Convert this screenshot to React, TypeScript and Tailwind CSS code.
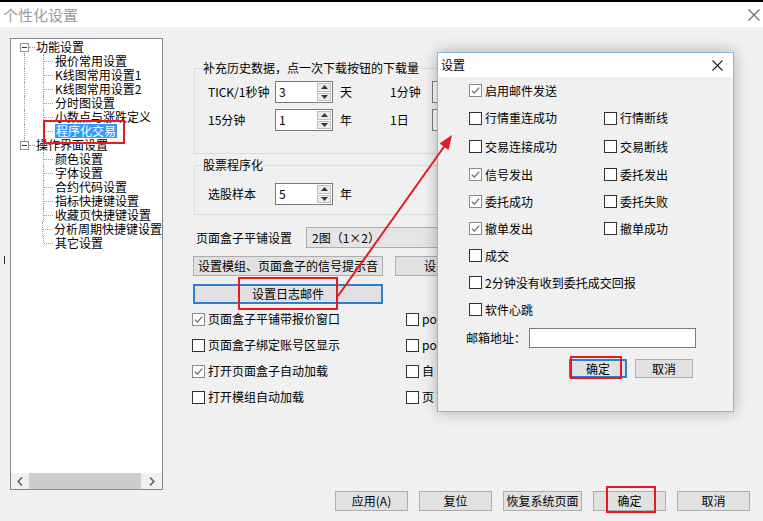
import React from "react";

function Box({ checked }: { checked?: boolean }) {
  return (
    <span
      className={`relative inline-flex h-[13px] w-[13px] shrink-0 bg-white border ${
        checked ? "border-[#8a8a8a]" : "border-[#333333]"
      }`}
    >
      {checked && (
        <svg className="absolute left-0 top-0" width="11" height="11" viewBox="0 0 11 11">
          <path d="M1.8 5.6 L4.3 8.1 L9.2 2.6" fill="none" stroke="#6a6a6a" strokeWidth="1.3" />
        </svg>
      )}
    </span>
  );
}

function Check({ label, checked }: { label: string; checked?: boolean }) {
  return (
    <span className="flex items-center gap-[3px] whitespace-nowrap">
      <Box checked={checked} />
      <span className="block leading-[14px]">{label}</span>
    </span>
  );
}

function Spin({ v }: { v: string }) {
  return (
    <div className="flex h-[22px] w-[58px] shrink-0 border border-[#7a7a7a] bg-white">
      <span className="flex-1 pl-[3px] leading-[20px]">{v}</span>
      <div className="flex w-[15px] flex-col gap-[1px] py-[1px] pr-[1px]">
        <span className="flex flex-1 items-center justify-center border border-[#bdbdbd] bg-[#ececec]">
          <svg width="7" height="4" viewBox="0 0 7 4">
            <path d="M0 4 L3.5 0 L7 4Z" fill="#333" />
          </svg>
        </span>
        <span className="flex flex-1 items-center justify-center border border-[#bdbdbd] bg-[#ececec]">
          <svg width="7" height="4" viewBox="0 0 7 4">
            <path d="M0 0 L3.5 4 L7 0Z" fill="#333" />
          </svg>
        </span>
      </div>
    </div>
  );
}

function XIcon({ size, color }: { size: number; color: string }) {
  return (
    <svg width={size} height={size} viewBox={`0 0 ${size} ${size}`}>
      <path d={`M0.5 0.5 L${size - 0.5} ${size - 0.5} M${size - 0.5} 0.5 L0.5 ${size - 0.5}`} stroke={color} strokeWidth="1.1" fill="none" />
    </svg>
  );
}

type Row = { text: string; level: 0 | 1; sel?: boolean; last?: boolean; group: 1 | 2; first?: boolean };

const rows: Row[] = [
  { text: "功能设置", level: 0, group: 1, first: true },
  { text: "报价常用设置", level: 1, group: 1 },
  { text: "K线图常用设置1", level: 1, group: 1 },
  { text: "K线图常用设置2", level: 1, group: 1 },
  { text: "分时图设置", level: 1, group: 1 },
  { text: "小数点与涨跌定义", level: 1, group: 1 },
  { text: "程序化交易", level: 1, group: 1, sel: true, last: true },
  { text: "操作界面设置", level: 0, group: 2 },
  { text: "颜色设置", level: 1, group: 2 },
  { text: "字体设置", level: 1, group: 2 },
  { text: "合约代码设置", level: 1, group: 2 },
  { text: "指标快捷键设置", level: 1, group: 2 },
  { text: "收藏页快捷键设置", level: 1, group: 2 },
  { text: "分析周期快捷键设置", level: 1, group: 2 },
  { text: "其它设置", level: 1, group: 2, last: true },
];

function TreeRow({ r }: { r: Row }) {
  if (r.level === 0) {
    return (
      <div className="flex h-[14px] items-center">
        <div className="relative h-full w-[20px]">
          {r.first ? (
            <span className="absolute left-[10px] top-[7px] h-[7px] border-l border-dotted border-[#a0a0a0]" />
          ) : (
            <span className="absolute left-[10px] top-0 h-[7px] border-l border-dotted border-[#a0a0a0]" />
          )}
          <span className="absolute left-[15px] top-[7px] w-[6px] border-t border-dotted border-[#a0a0a0]" />
          <span className="absolute left-[6px] top-[3px] flex h-[9px] w-[9px] items-center justify-center border border-[#919191] bg-white">
            <span className="h-0 w-[5px] border-t border-[#333]" />
          </span>
        </div>
        <span className="ml-[2px] block whitespace-nowrap leading-[14px]">{r.text}</span>
      </div>
    );
  }
  return (
    <div className="flex h-[14px] items-center">
      <div className="relative h-full w-[20px]">
        {r.group === 1 && <span className="absolute left-[10px] top-0 h-[14px] border-l border-dotted border-[#a0a0a0]" />}
      </div>
      <div className="relative h-full w-[19px]">
        <span
          className={`absolute left-[9px] top-0 border-l border-dotted border-[#a0a0a0] ${r.last ? "h-[7px]" : "h-[14px]"}`}
        />
        <span className="absolute left-[10px] top-[7px] w-[9px] border-t border-dotted border-[#a0a0a0]" />
      </div>
      <span
        className={`ml-[2px] block whitespace-nowrap leading-[14px] ${r.sel ? "bg-[#3399ff] px-[1px] text-white" : ""}`}
      >
        {r.text}
      </span>
    </div>
  );
}

function Btn({ children, cls }: { children: React.ReactNode; cls: string }) {
  return (
    <div className={`flex shrink-0 items-center justify-center overflow-hidden whitespace-nowrap leading-[14px] ${cls}`}>{children}</div>
  );
}

export default function App() {
  return (
    <div className="relative h-[521px] w-[763px] overflow-hidden bg-[#f0f0f0] font-['Noto_Sans_CJK_SC','Noto_Sans',sans-serif] text-[12px] text-black">
      <div className="h-[2px] bg-black" />
      <div className="flex h-[25px] items-center justify-between bg-white pl-[3px] pr-[3px]">
        <span className="text-[15px] leading-[20px] text-[#9b9b9b]">个性化设置</span>
        <XIcon size={12} color="#666" />
      </div>

      <div className="flex h-[494px]">
        {/* tree */}
        <div className="ml-[10px] mt-[11px] flex h-[452px] w-[153px] shrink-0 flex-col border border-[#828790] bg-white">
          <div className="flex flex-col pl-[3px] pt-[1px]">
            {rows.map((r, i) => (
              <TreeRow key={i} r={r} />
            ))}
          </div>
          <div className="mt-auto flex h-[16px] items-stretch bg-[#f0f0f0]">
            <div className="flex w-[17px] items-center justify-center">
              <svg width="6" height="9" viewBox="0 0 6 9">
                <path d="M5 0.5 L1.2 4.5 L5 8.5" fill="none" stroke="#606060" strokeWidth="1.6" />
              </svg>
            </div>
            <div className="ml-[1px] w-[112px] bg-[#cdcdcd]" />
            <div className="flex flex-1 items-center justify-center">
              <svg width="6" height="9" viewBox="0 0 6 9">
                <path d="M1 0.5 L4.8 4.5 L1 8.5" fill="none" stroke="#606060" strokeWidth="1.6" />
              </svg>
            </div>
          </div>
        </div>

        {/* right column */}
        <div className="ml-[31px] flex w-[569px] flex-col">
          {/* upper part: its right side lies under the dialog, so it is clipped at the dialog's edge */}
          <div className="-ml-[3px] flex w-[246px] flex-col overflow-hidden pl-[3px]">
            <div className="mt-[41px] flex h-[86px] w-[530px] shrink-0 flex-col border border-[#dcdcdc]">
              <span className="-mt-[9px] ml-[7px] w-fit bg-[#f0f0f0] px-[1px] leading-[16px]">补充历史数据，点一次下载按钮的下载量</span>
              <div className="mt-[5px] flex h-[22px] items-center pl-[13px]">
                <span className="w-[67px] shrink-0">TICK/1秒钟</span>
                <Spin v="3" />
                <span className="ml-[7px] w-[50px] shrink-0">天</span>
                <span className="w-[42px] shrink-0">1分钟</span>
                <Spin v="" />
              </div>
              <div className="mt-[6px] flex h-[22px] items-center pl-[13px]">
                <span className="w-[67px] shrink-0">15分钟</span>
                <Spin v="1" />
                <span className="ml-[7px] w-[50px] shrink-0">年</span>
                <span className="w-[42px] shrink-0">1日</span>
                <Spin v="" />
              </div>
            </div>

            <div className="mt-[11px] flex h-[50px] w-[530px] shrink-0 flex-col border border-[#dcdcdc]">
              <span className="-mt-[9px] ml-[7px] w-fit bg-[#f0f0f0] px-[1px] leading-[16px]">股票程序化</span>
              <div className="mt-[10px] flex h-[22px] items-center pl-[13px]">
                <span className="w-[67px] shrink-0">选股样本</span>
                <Spin v="5" />
                <span className="ml-[7px]">年</span>
              </div>
            </div>

            <div className="mt-[12px] flex h-[21px] items-center pl-[2px]">
              <span className="w-[110px] shrink-0">页面盒子平铺设置</span>
              <div className="flex h-[21px] w-[300px] shrink-0 items-center border border-[#acacac] bg-[#e5e5e5] pl-[5px]">2图（1×2）</div>
            </div>

            <div className="-ml-[1px] mt-[8px] flex gap-[12px]">
              <Btn cls="h-[20px] w-[190px] border border-[#adadad] bg-[#e1e1e1]">设置模组、页面盒子的信号提示音</Btn>
              <Btn cls="h-[20px] w-[60px] justify-end border border-[#adadad] bg-[#e1e1e1] pr-[18px]">设</Btn>
            </div>
            <div className="-ml-[1px] mt-[8px] flex">
              <Btn cls="h-[20px] w-[190px] border-2 border-[#2f7fd1] bg-[#e1e1e1]">设置日志邮件</Btn>
            </div>

            <div className="-ml-[2px] mt-[2px] grid grid-cols-[214px_32px]">
              <div className="flex h-[26px] items-center"><Check label="页面盒子平铺带报价窗口" checked /></div>
              <div className="flex h-[26px] items-center"><Check label="pop" /></div>
              <div className="flex h-[26px] items-center"><Check label="页面盒子绑定账号区显示" /></div>
              <div className="flex h-[26px] items-center"><Check label="pop" /></div>
              <div className="flex h-[26px] items-center"><Check label="打开页面盒子自动加载" checked /></div>
              <div className="flex h-[26px] items-center"><Check label="自" /></div>
              <div className="flex h-[26px] items-center"><Check label="打开模组自动加载" /></div>
              <div className="flex h-[26px] items-center"><Check label="页" /></div>
            </div>
          </div>

          <div className="mb-[10px] ml-[141px] mt-auto flex gap-[11px]">
            <Btn cls="h-[20px] w-[73px] border border-[#adadad] bg-[#e1e1e1]">应用(A)</Btn>
            <Btn cls="h-[20px] w-[73px] border border-[#adadad] bg-[#e1e1e1]">复位</Btn>
            <Btn cls="h-[20px] w-[79px] border border-[#adadad] bg-[#e1e1e1]">恢复系统页面</Btn>
            <Btn cls="h-[20px] w-[73px] border border-[#adadad] bg-[#e1e1e1]">确定</Btn>
            <Btn cls="h-[20px] w-[73px] border border-[#adadad] bg-[#e1e1e1]">取消</Btn>
          </div>
        </div>
      </div>

      {/* stray mark at left edge */}
      <span className="absolute left-[4px] top-[256px] h-[8px] w-[1px] bg-[#333]" />

      {/* dialog */}
      <div className="absolute left-[437px] top-[52px] flex h-[360px] w-[297px] flex-col border border-[#86b6e6] bg-[#f0f0f0] shadow-[0_0_14px_rgba(0,0,0,0.28)]">
        <div className="flex h-[24px] shrink-0 items-center justify-between bg-white pl-[3px] pr-[10px]">
          <span className="leading-[14px]">设置</span>
          <XIcon size={11} color="#222" />
        </div>
        <div className="flex flex-col pl-[31px]">
          <div className="flex h-[27px] items-center"><Check label="启用邮件发送" checked /></div>
          <div className="flex h-[28px] items-center">
            <div className="w-[135px]"><Check label="行情重连成功" /></div>
            <Check label="行情断线" />
          </div>
          <div className="flex h-[29px] items-center">
            <div className="w-[135px]"><Check label="交易连接成功" /></div>
            <Check label="交易断线" />
          </div>
          <div className="flex h-[27px] items-center">
            <div className="w-[135px]"><Check label="信号发出" checked /></div>
            <Check label="委托发出" />
          </div>
          <div className="flex h-[27px] items-center">
            <div className="w-[135px]"><Check label="委托成功" checked /></div>
            <Check label="委托失败" />
          </div>
          <div className="flex h-[27px] items-center">
            <div className="w-[135px]"><Check label="撤单发出" checked /></div>
            <Check label="撤单成功" />
          </div>
          <div className="flex h-[27px] items-center"><Check label="成交" /></div>
          <div className="flex h-[27px] items-center"><Check label="2分钟没有收到委托成交回报" /></div>
          <div className="flex h-[27px] items-center"><Check label="软件心跳" /></div>
          <div className="-ml-[3px] mt-[5px] flex h-[20px] items-center">
            <span className="w-[63px]">邮箱地址：</span>
            <div className="h-[20px] w-[167px] border border-[#7a7a7a] bg-white" />
          </div>
          <div className="ml-[100px] mt-[11px] flex gap-[8px]">
            <Btn cls="h-[19px] w-[58px] border-2 border-[#2f7fd1] bg-[#e1e1e1]">确定</Btn>
            <Btn cls="h-[19px] w-[58px] border border-[#adadad] bg-[#e1e1e1]">取消</Btn>
          </div>
        </div>
      </div>

      {/* red annotations */}
      <div className="absolute left-[43px] top-[120px] h-[24px] w-[82px] border-2 border-[#e41b23]" />
      <div className="absolute left-[238px] top-[277px] h-[33px] w-[100px] border-2 border-[#e41b23]" />
      <div className="absolute left-[570px] top-[356px] h-[23px] w-[52px] border-2 border-[#e41b23]" />
      <div className="absolute left-[606px] top-[486px] h-[27px] w-[50px] border-2 border-[#e41b23]" />
      <svg className="pointer-events-none absolute left-0 top-0" width="763" height="521" viewBox="0 0 763 521">
        <line x1="338" y1="296" x2="446" y2="144" stroke="#e41b23" strokeWidth="2" />
        <polygon points="452,135 448.5,150 439.5,143.5" fill="#e41b23" />
      </svg>
    </div>
  );
}
